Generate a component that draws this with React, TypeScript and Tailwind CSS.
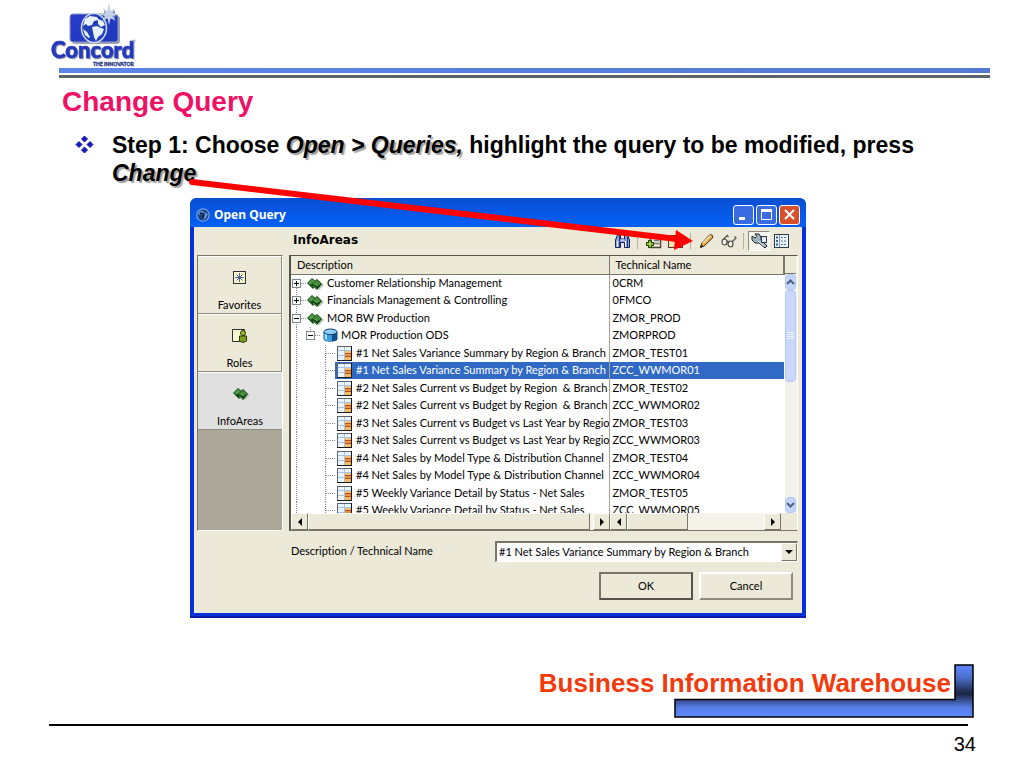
import type { ReactNode } from "react";

type Kind = "area" | "ods" | "query";
type Row = { kind: Kind; name: string; tech: string; open?: boolean; first?: boolean; selected?: boolean };

const rows: Row[] = [
  { kind: "area", name: "Customer Relationship Management", tech: "0CRM", first: true },
  { kind: "area", name: "Financials Management & Controlling", tech: "0FMCO" },
  { kind: "area", name: "MOR BW Production", tech: "ZMOR_PROD", open: true },
  { kind: "ods", name: "MOR Production ODS", tech: "ZMORPROD", open: true },
  { kind: "query", name: "#1 Net Sales Variance Summary by Region & Branch", tech: "ZMOR_TEST01" },
  { kind: "query", name: "#1 Net Sales Variance Summary by Region & Branch", tech: "ZCC_WWMOR01", selected: true },
  { kind: "query", name: "#2 Net Sales Current vs Budget by Region  & Branch", tech: "ZMOR_TEST02" },
  { kind: "query", name: "#2 Net Sales Current vs Budget by Region  & Branch", tech: "ZCC_WWMOR02" },
  { kind: "query", name: "#3 Net Sales Current vs Budget vs Last Year by Region", tech: "ZMOR_TEST03" },
  { kind: "query", name: "#3 Net Sales Current vs Budget vs Last Year by Region", tech: "ZCC_WWMOR03" },
  { kind: "query", name: "#4 Net Sales by Model Type & Distribution Channel", tech: "ZMOR_TEST04" },
  { kind: "query", name: "#4 Net Sales by Model Type & Distribution Channel", tech: "ZCC_WWMOR04" },
  { kind: "query", name: "#5 Weekly Variance Detail by Status - Net Sales", tech: "ZMOR_TEST05" },
  { kind: "query", name: "#5 Weekly Variance Detail by Status - Net Sales", tech: "ZCC_WWMOR05" },
];

const raised = "border border-t-white border-l-white border-r-[#77756a] border-b-[#77756a] bg-[#ece9d8]";

function Logo() {
  return (
    <svg width="90" height="68" viewBox="0 0 90 68" role="img" aria-label="Concord, the innovator">
      <defs>
        <linearGradient id="cam" x1="0" y1="0" x2="1" y2="1">
          <stop offset="0" stopColor="#2a3cd0" />
          <stop offset="1" stopColor="#1d39b8" />
        </linearGradient>
      </defs>
      <rect x="22" y="16" width="48" height="28" rx="3" fill="#9aa3b4" />
      <rect x="20" y="14" width="48" height="28" rx="3" fill="url(#cam)" stroke="#8b96bd" />
      <rect x="54" y="11" width="11" height="8" fill="#6f86bd" />
      <ellipse cx="44" cy="28" rx="12.500" ry="14.500" fill="#1f3fb6" stroke="#c9d6ee" strokeWidth="1.600" />
      <path d="M35 19l5-3 7 1 2 3-5 1-2 4-4 1-2-2-3 2zM42 27l5-1 4 2 3 1-2 5-4 3-2 4-2-4-1-5zM48 19l5 2 2 4-4 2-3-3zM33 29l4 3 3 5-1 1-4-3z" fill="#e9f1fb" />
      <path d="M59 3l1.600 8 5.400-3-3.400 5 7.400 1.500-7.400 1.500 3 5-5-3L59 25l-1.600-7-5 3 3-5-6.400-1.500 6.400-1.500-3-5 5 3z" fill="#c4d0e4" />
      <g fontFamily="Lato, 'Liberation Sans', sans-serif" fontWeight="900" className="drop-shadow-[1px_1px_0_#8f98a8]">
        <text x="1" y="58" fontSize="22" fill="#2439bd" stroke="#2439bd" strokeWidth=".6">Concord</text>
      </g>
      <text x="43" y="66" fontSize="5" fontFamily="Lato, sans-serif" fontWeight="900" fill="#1f3784" stroke="#1f3784" strokeWidth=".3">THE INNOVATOR</text>
      <circle cx="84" cy="41" r="1" fill="none" stroke="#8490b5" />
    </svg>
  );
}

function Diamonds() {
  return (
    <>
      <path d="M9 2l7 6-5 5-7-6z" transform="translate(1 0)" fill="#b8c3b4" />
      <path d="M0 6l5-5 6 5-5 6z" fill="#16501d" />
      <path d="M1 6l4-4 5 4-5 2z" fill="#4e9a46" />
      <path d="M4 8l6-6 5 5-5 6z" fill="#123f18" />
      <path d="M5.500 7l4.500-4 4 4-4 2z" fill="#468f38" />
      <path d="M6 9l4 3M8 7l3 2" stroke="#5fa84c" strokeWidth="1" />
    </>
  );
}

function TreeGutter({ row }: { row: Row }) {
  const dots = { stroke: "#8c8c8c", strokeDasharray: "1 1", fill: "none" } as const;
  const box = (x: number) => (
    <g shapeRendering="crispEdges">
      <rect x={x + 0.5} y="4.500" width="8" height="8" fill="#fff" stroke="#7d8590" />
      <path d={`M${x + 2} 8.500h5${row.open ? "" : `M${x + 4.5} 6v5`}`} stroke="#000" />
    </g>
  );
  if (row.kind === "area") {
    return (
      <svg width="36" height="17" className="shrink-0 overflow-visible" aria-hidden="true">
        <path d={`M5.500 ${row.first ? 9 : 0}V18M10 8.500h6`} {...dots} />
        {box(1)}
        <g transform="translate(16 2)"><Diamonds /></g>
      </svg>
    );
  }
  if (row.kind === "ods") {
    return (
      <svg width="50" height="17" className="shrink-0 overflow-visible" aria-hidden="true">
        <path d="M5.500 0V18M19.500 0V4M24 8.500h6" {...dots} />
        {box(15)}
        <path d="M32.500 5v7c0 3.500 14 3.500 14 0V5z" fill="#124f88" />
        <path d="M33 5v7c0 2 6 3 8 2V6z" fill="#3d9be0" />
        <path d="M34 7v5l2 1V7z" fill="#a9dcfa" />
        <ellipse cx="39.500" cy="4.800" rx="6.500" ry="2.800" fill="#8fd0f7" stroke="#0e3f70" />
      </svg>
    );
  }
  return (
    <svg width="44" height="17" className="shrink-0 overflow-visible" aria-hidden="true">
      <path d="M5.500 0V18M34.500 0V18M35 8.500h9" {...dots} />
    </svg>
  );
}

function QueryIcon() {
  return (
    <svg width="15" height="15" viewBox="0 0 15 15" className="shrink-0" shapeRendering="crispEdges" aria-hidden="true">
      <rect width="15" height="15" fill="#5b6470" />
      <path d="M14 0h1v15H0v-1h14z" fill="#15181d" />
      <rect x="1" y="1" width="13" height="13" fill="#eaf4fc" />
      <path d="M1 4.500h13M1 9.500h7M7.500 1v13" stroke="#a6c4e4" />
      <rect x="8" y="5" width="6" height="3" fill="#f6c070" />
      <rect x="8" y="8" width="6" height="3" fill="#ee9238" />
      <rect x="8" y="11" width="6" height="3" fill="#f6b95c" />
      <path d="M8 7.500h6M8 10.500h6" stroke="#b4501f" />
    </svg>
  );
}

function TreeTable() {
  return (
    <table className="w-full table-fixed border-collapse">
      <thead>
        <tr className="h-[18px] bg-[#ece9d8] text-left">
          <th className="w-[318px] border-r border-b border-[#77756a] p-0 pl-1.5 leading-4 font-normal">Description</th>
          <th className="border-b border-[#77756a] border-r-2 border-r-[#77756a] p-0 pl-1.5 leading-4 font-normal">Technical Name</th>
        </tr>
      </thead>
      <tbody>
        {rows.map((row) => (
          <tr key={row.tech} className="odd:h-[18px] even:h-[17px]">
            <td className="overflow-hidden border-r border-[#a5a295] p-0">
              <div className="flex h-[17px] items-center whitespace-pre">
                <TreeGutter row={row} />
                {row.kind === "query" ? (
                  <div className={row.selected ? "flex h-full grow items-center gap-1 bg-[#316ac5] pl-0.5 text-white" : "flex h-full grow items-center gap-1 pl-0.5"}>
                    <QueryIcon />
                    {row.name}
                  </div>
                ) : (
                  row.name
                )}
              </div>
            </td>
            <td className="overflow-hidden p-0">
              <div className={row.selected ? "flex h-[17px] items-center bg-[#316ac5] pl-[3px] text-white" : "flex h-[17px] items-center pl-[3px]"}>{row.tech}</div>
            </td>
          </tr>
        ))}
      </tbody>
    </table>
  );
}

function Arrow({ dir }: { dir: "left" | "right" }) {
  return (
    <svg width="4" height="8" viewBox="0 0 4 8" aria-hidden="true">
      <path d={dir === "left" ? "M4 0v8L0 4z" : "M0 0v8l4-4z"} fill="#000" />
    </svg>
  );
}

function HBar({ className, thumb }: { className: string; thumb: string }) {
  return (
    <div className={className}>
      <button aria-label="Scroll left" className={`flex w-[17px] shrink-0 items-center justify-center ${raised}`}><Arrow dir="left" /></button>
      <div className="flex grow bg-[#f4f2e9]"><div className={`${thumb} ${raised}`} /></div>
      <button aria-label="Scroll right" className={`flex w-[17px] shrink-0 items-center justify-center ${raised}`}><Arrow dir="right" /></button>
    </div>
  );
}

function VButton({ up }: { up?: boolean }) {
  return (
    <button aria-label={up ? "Scroll up" : "Scroll down"} className="flex h-4 items-center justify-center rounded-sm border border-[#b3c8f3] bg-[#c5d6fc]">
      <svg width="9" height="6" viewBox="0 0 9 6" aria-hidden="true">
        <path d={up ? "M1 5l3.500-3.500L8 5" : "M1 1l3.500 3.500L8 1"} fill="none" stroke="#4d6185" strokeWidth="2" />
      </svg>
    </button>
  );
}

function NavButton({ label, active, children }: { label: string; active?: boolean; children: ReactNode }) {
  return (
    <button className={active
      ? "flex h-[58px] flex-col items-center justify-between border-t border-b border-t-white border-b-[#8d8b80] bg-[#e0e0e0] pt-3"
      : "flex h-[58px] flex-col items-center justify-between border-t border-r border-b border-t-white border-r-[#8d8b80] border-b-[#8d8b80] bg-[#ece9d8] pt-3"}>
      <svg width="17" height="17" viewBox="0 0 17 17" aria-hidden="true">{children}</svg>
      <span className="leading-4">{label}</span>
    </button>
  );
}

function Tool({ label, pressed, children }: { label: string; pressed?: boolean; children: ReactNode }) {
  return (
    <button aria-label={label} className={pressed
      ? "flex h-5 w-[22px] items-center justify-center border border-t-[#8d8b80] border-r-white border-b-white border-l-[#8d8b80] bg-[#f5f3ea]"
      : "flex h-5 w-[22px] items-center justify-center"}>
      <svg width="17" height="16" viewBox="0 0 17 16" aria-hidden="true">{children}</svg>
    </button>
  );
}

const Divider = () => <div className="mx-1 h-4 w-px bg-[#b5b2a4]" />;

function Toolbar() {
  return (
    <div className="flex items-center">
      <Tool label="Find">
        <path d="M1.500 14.500V7l2-5h3v4h4V2h3l2 5v7.500h-5v-5h-4v5z" fill="#8ea2dc" stroke="#17255e" />
        <path d="M3.500 8v6M11.500 8v6M7 7h3" stroke="#eef2ff" />
        <path d="M5.500 3v11M13.500 4v10" stroke="#26398a" />
      </Tool>
      <Divider />
      <Tool label="New query">
        <rect x="5.500" y="3.500" width="10" height="11" fill="#f3ead0" stroke="#4a463c" strokeWidth="1.500" />
        <path d="M9 7.500h5M9 10.500h5" stroke="#6d7890" strokeWidth="1.500" />
        <path d="M1 11h8M5 7v8" stroke="#234f0c" strokeWidth="4" />
        <path d="M2 11h6M5 8v6" stroke="#c5dc45" strokeWidth="1.500" />
      </Tool>
      <Tool label="Delete query">
        <rect x="1.500" y="2.500" width="14" height="12" fill="#f6e2b0" stroke="#4a3a2d" />
        <path d="M8 7l7 7M15 7l-7 7" stroke="#c31d10" strokeWidth="3" />
      </Tool>
      <Divider />
      <Tool label="Change">
        <path d="M2.500 14.500l1-4 8-8.500q4-1 3 3L6 13z" fill="#edac50" stroke="#3c2b18" />
        <path d="M5 10l7.500-7.500" stroke="#ffe6a9" strokeWidth="1.500" />
        <path d="M2 15l1.500-3.500 2 2z" fill="#222" />
      </Tool>
      <Tool label="Display">
        <g fill="#f5f4ed" stroke="#4c4d48" strokeWidth="1.200">
          <ellipse cx="4.500" cy="9" rx="2.500" ry="3" />
          <ellipse cx="10.500" cy="11" rx="2.500" ry="3" />
          <path d="M2.500 7l5-4.500 1 1.500M7 9q1-2 2 1M12 9l4-4-1.500-1.500" fill="none" />
        </g>
      </Tool>
      <Divider />
      <Tool label="Technical name" pressed>
        <path d="M1 3l3 2 1.500-1.500L4 1h4l2 3v3l6 6-2 2-6-5H4L1 7z" fill="#9fb0bd" stroke="#202830" />
        <rect x="10.500" y="3.500" width="5" height="6" fill="#e3ebf2" stroke="#2c3b52" />
        <path d="M7 8l6 5" stroke="#f3f7fb" />
      </Tool>
      <Tool label="Properties">
        <rect x="1.500" y="1.500" width="14" height="13" fill="#eaf2fb" stroke="#2c3c4e" />
        <path d="M6.500 2v12" stroke="#7f93ab" />
        <path d="M3 4.500h2M3 8h2M3 11.500h2" stroke="#2f5fa8" strokeWidth="2" />
        <path d="M8 4.500h6M8 8h6M8 11.500h6" stroke="#5e7795" strokeDasharray="2 1" />
      </Tool>
    </div>
  );
}

function TitleBar() {
  const btn = "flex h-5 w-[21px] items-center justify-center rounded-[3px] border border-white";
  return (
    <header className="flex h-[29px] items-center justify-between rounded-t-md bg-linear-to-b from-[#0a4fd0] via-[#0657e6] to-[#0361f5] pt-1 pr-1.5 pl-1.5">
      <div className="flex items-center gap-1">
        <svg width="14" height="14" viewBox="0 0 14 14" aria-hidden="true">
          <circle cx="7" cy="7" r="6.200" fill="#164185" stroke="#79a0de" strokeWidth="1.300" />
          <path d="M2 5q3-4 6-1l4 2-2 4-3 2 1-4-3-2-2 1z" fill="#5e92dc" />
          <path d="M4 5l4 1-1 4" stroke="#071a3e" strokeWidth="1.500" fill="none" />
        </svg>
        <h2 className="font-['Noto_Sans','Liberation_Sans',sans-serif] text-xs leading-4 font-bold text-white">Open Query</h2>
      </div>
      <div className="flex gap-0.5">
        <button aria-label="Minimize" className={`${btn} bg-[#3a6be0]`}>
          <svg width="13" height="13" aria-hidden="true"><path d="M2 10.500h6" stroke="#fff" strokeWidth="3" /></svg>
        </button>
        <button aria-label="Maximize" className={`${btn} bg-[#3a6be0]`}>
          <svg width="13" height="13" aria-hidden="true"><path d="M1.500 2v9.500h10V2" fill="none" stroke="#fff" /><path d="M1 2.500h11" stroke="#fff" strokeWidth="3" /></svg>
        </button>
        <button aria-label="Close" className={`${btn} bg-[#d9512c]`}>
          <svg width="13" height="13" aria-hidden="true"><path d="M2 2l9 9M11 2l-9 9" stroke="#fff" strokeWidth="2" /></svg>
        </button>
      </div>
    </header>
  );
}

function QueryDialog() {
  return (
    <section aria-label="Open Query" className="ml-[190px] w-[616px] rounded-t-lg border-b-2 border-[#0a1fa8] bg-[#0831d9] font-[Lato,'Liberation_Sans',sans-serif] text-[11px] text-black [font-variant-ligatures:none]">
      <TitleBar />
      <div className="mx-1 bg-[#ece9d8] pr-1 pl-[3px]">
        <div className="flex h-7 items-center justify-between pr-1.5 pl-24">
          <h3 className="pb-0.5 font-['DejaVu_Sans',sans-serif] text-xs font-bold">InfoAreas</h3>
          <Toolbar />
        </div>
        <div className="flex h-[276px] gap-1.5">
          <nav className="flex w-[86px] shrink-0 flex-col border border-t-[#77756a] border-r-white border-b-white border-l-[#77756a] bg-[#aca899]">
            <NavButton label="Favorites">
              <rect x="2.500" y="2.500" width="12" height="12" fill="#f8f6cd" stroke="#303030" />
              <path d="M8.500 4v9M4 8.500h9M5.500 5.500l6 6M11.500 5.500l-6 6" stroke="#5460a0" />
            </NavButton>
            <NavButton label="Roles">
              <path d="M1.500 2.500h12v12h-12z" fill="#f8f6cd" stroke="#303030" />
              <circle cx="12" cy="6" r="2.500" fill="#9fbb2e" stroke="#2b3a08" />
              <path d="M8.500 9h7v5q-3.500 3-7 0z" fill="#7ba021" stroke="#2b3a08" />
            </NavButton>
            <NavButton label="InfoAreas" active>
              <g transform="translate(1 2)"><Diamonds /></g>
            </NavButton>
          </nav>
          <div className="flex min-w-0 grow flex-col border border-t-[#55534b] border-r-white border-b-[#77756a] border-l-2 border-l-[#55534b] bg-white">
            <div className="flex min-h-0 grow">
              <div className="min-w-0 grow overflow-hidden"><TreeTable /></div>
              <div className="flex w-4 flex-col bg-[#f3f1ec] pr-px">
                <div className="h-[18px] shrink-0 border-b border-[#77756a] bg-[#ece9d8]" />
                <VButton up />
                <div className="flex h-[92px] items-center justify-center rounded-sm border border-[#b3c8f3] bg-[#c9d8fc]">
                  <svg width="7" height="8" aria-hidden="true"><path d="M0 .5h7M0 2.500h7M0 4.500h7M0 6.500h7" stroke="#edf3ff" /></svg>
                </div>
                <div className="grow" />
                <VButton />
              </div>
            </div>
            <div className="flex h-[17px] shrink-0 bg-[#ece9d8]">
              <HBar className="flex w-[319px]" thumb="w-[282px]" />
              <HBar className="flex grow" thumb="w-[61px]" />
              <div className="w-4" />
            </div>
          </div>
        </div>
        <div className="flex items-center justify-between pt-2.5 pl-[94px]">
          <label htmlFor="query-name">Description / Technical Name</label>
          <div className="relative w-[303px]">
            <select id="query-name" className="block h-[21px] w-full appearance-none border border-t-2 border-l-2 border-t-[#77756a] border-r-white border-b-white border-l-[#77756a] bg-white pl-0.5 text-[11px]">
              <option>#1 Net Sales Variance Summary by Region &amp; Branch</option>
            </select>
            <span className={`pointer-events-none absolute top-0.5 right-px flex h-[18px] w-4 items-center justify-center ${raised}`}>
              <svg width="8" height="4" aria-hidden="true"><path d="M0 0h8L4 4z" /></svg>
            </span>
          </div>
        </div>
        <div className="flex justify-end gap-1.5 pt-2.5 pr-[5px] pb-[13px]">
          <button className="h-7 w-[94px] border-2 border-t-[#77756a] border-r-[#55534b] border-b-[#55534b] border-l-[#77756a] bg-[#ece9d8]">OK</button>
          <button className="h-7 w-[94px] border-2 border-t-white border-r-[#8d8b80] border-b-[#8d8b80] border-l-white bg-[#ece9d8]">Cancel</button>
        </div>
      </div>
      <div className="h-[3px]" />
    </section>
  );
}

export default function App() {
  const glow = "italic [text-shadow:2px_2px_1px_#a0a0a0]";
  return (
    <main className="relative flex min-h-screen flex-col bg-white font-['Liberation_Sans',Arial,sans-serif] text-black">
      <header className="pr-[34px]">
        <div className="h-[68px] pl-[50px]"><Logo /></div>
        <div className="ml-[59px] h-[5px] bg-linear-to-r from-[#5b85e8] to-[#5578d4]" />
        <div className="mt-0.5 ml-[59px] h-[3px] bg-[#5c6468]" />
      </header>
      <h1 className="pt-2 pl-[62px] text-[28px] leading-8 font-bold text-[#ee1166]">Change Query</h1>
      <div className="flex gap-[18px] pt-[13px] pr-[60px] pl-[75px] text-[23px] leading-7 font-bold">
        <svg width="19" height="19" viewBox="0 0 19 19" className="mt-1 shrink-0" aria-hidden="true">
          <path d="M9.500 1l3 3-3 3-3-3zM9.500 12l3 3-3 3-3-3zM4 6.500l3 3-3 3-3-3zM15 6.500l3 3-3 3-3-3z" fill="#1a1ab8" stroke="#1a1ab8" />
        </svg>
        <p>
          Step 1: Choose <em className={glow}>Open &gt; Queries,</em> highlight the query to be modified, press <em className={glow}>Change</em>
        </p>
      </div>
      <div className="pt-[11px]"><QueryDialog /></div>
      <svg width="520" height="90" viewBox="0 0 520 90" className="pointer-events-none absolute top-[170px] left-[185px]" aria-hidden="true">
        <path d="M7 12L492 69" stroke="#f00" strokeWidth="6" strokeLinecap="round" />
        <path d="M508 71L491 60L489 80z" fill="#f00" />
      </svg>
      <footer className="mt-auto pb-3">
        <div className="relative mr-[56px] ml-[49px] flex h-[62px] justify-end border-b-2 border-black pr-[17px]">
          <svg width="300" height="54" viewBox="0 0 300 54" className="absolute -right-1.5 bottom-1.5" aria-hidden="true">
            <defs>
              <linearGradient id="corner" x1="0" y1="0" x2="0" y2="1">
                <stop offset="0" stopColor="#5b86fa" />
                <stop offset=".22" stopColor="#4f72d2" />
                <stop offset=".55" stopColor="#1a2444" />
                <stop offset=".82" stopColor="#567ce6" />
                <stop offset="1" stopColor="#5f8cff" />
              </linearGradient>
            </defs>
            <path d="M281 1h18v52H1V35.500h280z" fill="url(#corner)" stroke="#000" strokeWidth="1.500" />
          </svg>
          <p className="relative text-[26px] leading-[38px] font-bold text-[#f23a0c]">Business Information Warehouse</p>
        </div>
        <p className="pt-1.5 pr-12 text-right text-xl leading-6">34</p>
      </footer>
    </main>
  );
}
